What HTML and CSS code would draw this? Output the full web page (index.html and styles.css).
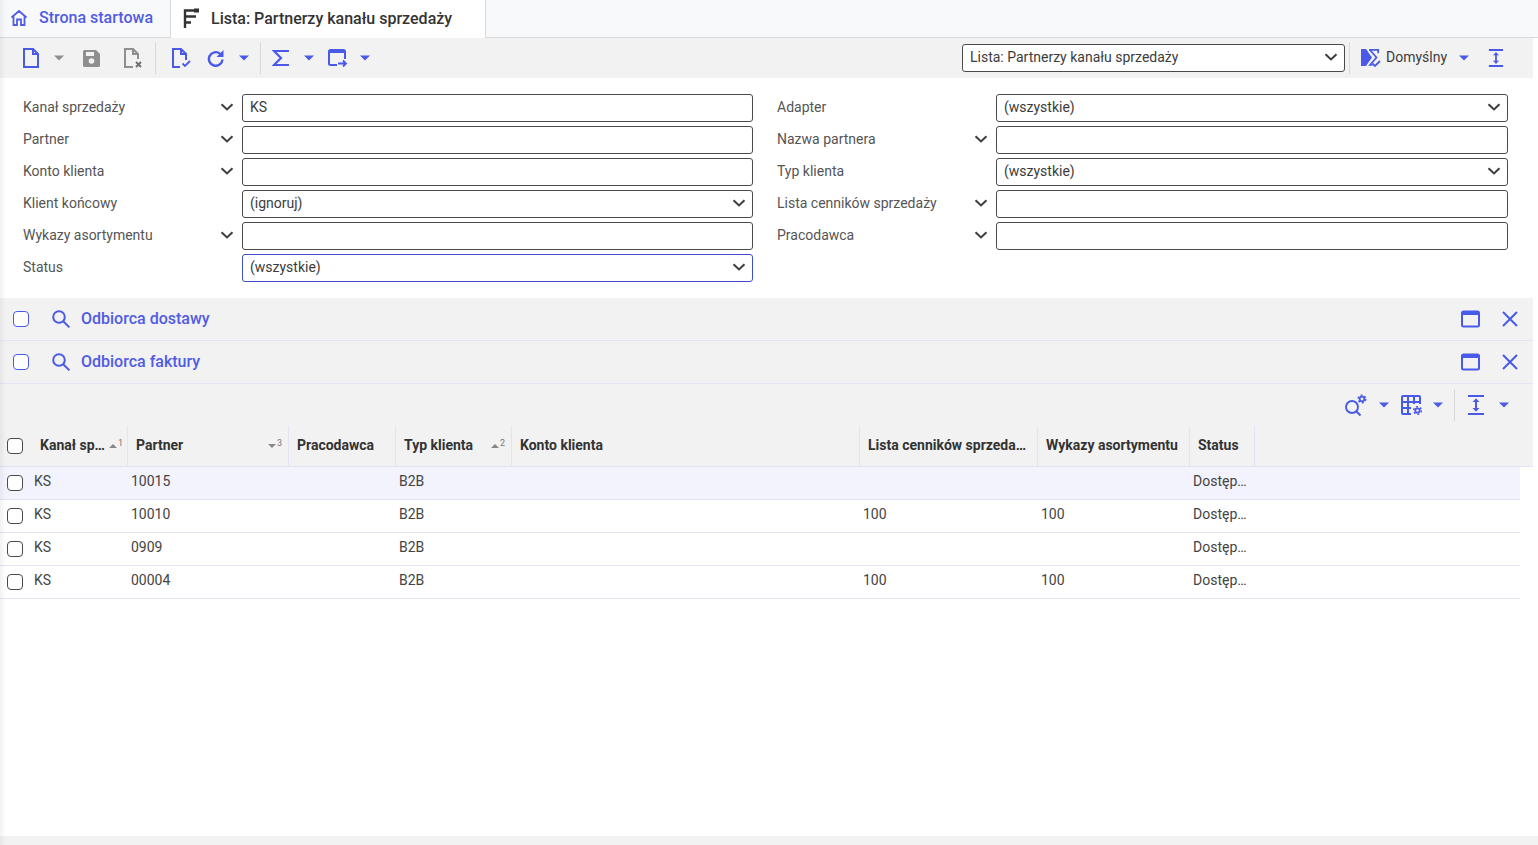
FILE: index.html
```html
<!DOCTYPE html>
<html lang="pl">
<head>
    <meta charset="UTF-8">
    <title>Lista: Partnerzy kanału sprzedaży</title>
    <link rel="stylesheet" href="styles.css">
</head>
<body>
    <svg class="sprites" aria-hidden="true">
        <symbol id="i-caret" viewBox="0 0 10 6"><path d="M0 .5h10L5 5.5z" fill="currentColor"/></symbol>
        <symbol id="i-chevron" viewBox="0 0 14 8"><path d="M1.500 1.200 7 6.400l5.500-5.200" fill="none" stroke="currentColor" stroke-width="2"/></symbol>
        <symbol id="i-search" viewBox="0 0 20 20"><circle cx="8" cy="8" r="5.800" fill="none" stroke="currentColor" stroke-width="2"/><path d="m12.200 12.200 6.200 6.200" stroke="currentColor" stroke-width="2"/></symbol>
        <symbol id="i-window" viewBox="0 0 19 18"><rect x="1" y="1.500" width="17" height="15" rx="1.500" fill="none" stroke="currentColor" stroke-width="2"/><path d="M1 1.500h17V5H1z" fill="currentColor"/></symbol>
        <symbol id="i-close" viewBox="0 0 16 16"><path d="m1 1 14 14M15 1 1 15" stroke="currentColor" stroke-width="2"/></symbol>
        <symbol id="i-expand" viewBox="0 0 18 20"><path d="M1 1h16M1 19h16" stroke="currentColor" stroke-width="2"/><path d="M9 4v12" stroke="currentColor" stroke-width="2"/><path d="M5.500 7 9 3.500 12.500 7zM5.500 13 9 16.500 12.500 13z" fill="currentColor"/></symbol>
    </svg>

    <div class="app">
        <nav class="tabs">
            <a class="tab tab-home">
                <svg class="tab-icon" width="18" height="18" viewBox="0 0 18 18"><path d="M1.500 8.500 9 2l7.500 6.500M3.500 7v9h3.500v-5.500h4V16h3.500V7" fill="none" stroke="currentColor" stroke-width="1.800"/></svg>
                Strona startowa
            </a>
            <a class="tab tab-active">
                <svg class="tab-icon" width="18" height="20" viewBox="0 0 18 20"><path d="M2 20V2.500h10M2 8.500h11M2 14.500h6" fill="none" stroke="currentColor" stroke-width="2.400"/><rect x="11" y="0.500" width="5" height="4" fill="currentColor"/></svg>
                Lista: Partnerzy kanału sprzedaży
            </a>
        </nav>

        <div class="toolbar">
            <div class="tool-group first">
                <span class="tool"><svg width="18" height="20" viewBox="0 0 18 20"><path d="M2 1h9l5 5v13H2z M11 1v5h5" fill="none" stroke="currentColor" stroke-width="2"/></svg></span>
                <span class="caret off"><svg width="10" height="6"><use href="#i-caret"/></svg></span>
                <span class="tool wide off"><svg width="19" height="18" viewBox="0 0 19 18"><path d="M1 2.500A1.500 1.500 0 0 1 2.500 1H14l4 4v11.500a1.500 1.500 0 0 1-1.500 1.500h-14A1.500 1.500 0 0 1 1 16.500z" fill="currentColor"/><path d="M4 3h8v4H4z" fill="#f2f2f2"/><circle cx="9.500" cy="12" r="2.800" fill="#f2f2f2"/></svg></span>
                <span class="tool wide off"><svg width="20" height="20" viewBox="0 0 20 20"><path d="M10 19H2V1h8l5 5v5M10 1v5h5" fill="none" stroke="currentColor" stroke-width="2"/><path d="m13 14 5 5m0-5-5 5" stroke="#6d6d6d" stroke-width="1.800"/></svg></span>
            </div>
            <span class="tool-sep"></span>
            <div class="tool-group second">
                <span class="tool check-doc"><svg width="20" height="20" viewBox="0 0 20 20"><path d="M9 19H2V1h8l5 5v6M10 1v5h5" fill="none" stroke="currentColor" stroke-width="2"/><path d="m11.500 15.500 2.500 2.500 5-5" fill="none" stroke="currentColor" stroke-width="1.800"/></svg></span>
                <span class="tool"><svg width="18" height="18" viewBox="0 0 18 18"><path d="M15.500 10.500a6.800 6.800 0 1 1-2.500-5.800" fill="none" stroke="currentColor" stroke-width="2.400"/><path d="M16.500 1v7h-7z" fill="currentColor"/></svg></span>
                <span class="caret"><svg width="10" height="6"><use href="#i-caret"/></svg></span>
            </div>
            <span class="tool-sep"></span>
            <div class="tool-group third">
                <span class="tool"><svg width="18" height="18" viewBox="0 0 18 18"><path d="M17 2H2l7 7-7 7h15" fill="none" stroke="currentColor" stroke-width="2.200"/></svg></span>
                <span class="caret"><svg width="10" height="6"><use href="#i-caret"/></svg></span>
                <span class="tool window-arrow"><svg width="20" height="20" viewBox="0 0 20 20"><path d="M9 17H2.500A1.500 1.500 0 0 1 1 15.500v-12A1.500 1.500 0 0 1 2.500 2h13A1.500 1.500 0 0 1 17 3.500V11" fill="none" stroke="currentColor" stroke-width="2"/><path d="M1 2h16v3H1z" fill="currentColor"/><path d="M10 15.500h8m-3-3 3 3-3 3" fill="none" stroke="currentColor" stroke-width="1.800"/></svg></span>
                <span class="caret"><svg width="10" height="6"><use href="#i-caret"/></svg></span>
            </div>

            <div class="tool-right">
                <div class="select view-select">Lista: Partnerzy kanału sprzedaży<svg class="chevron" width="14" height="8"><use href="#i-chevron"/></svg></div>
                <span class="tool-sep"></span>
                <svg class="layout-icon" width="21" height="20" viewBox="0 0 21 20"><path d="M1 1h5l6 8.500-6 8.500H1z" fill="currentColor"/><path d="M9 1.800h9.200v3.500M10 2l6.500 7.500L10 17h2.500" fill="none" stroke="currentColor" stroke-width="1.700"/><path d="m12.500 15.500 2.500 2.500 5-5" fill="none" stroke="currentColor" stroke-width="1.800"/></svg>
                <span class="layout-name">Domyślny</span>
                <span class="caret"><svg width="10" height="6"><use href="#i-caret"/></svg></span>
                <span class="tool expand"><svg width="16" height="20"><use href="#i-expand"/></svg></span>
            </div>
        </div>

        <form class="filters">
            <div class="filter-col">
                <label class="field"><span class="field-label">Kanał sprzedaży<svg class="chevron" width="14" height="8"><use href="#i-chevron"/></svg></span><span class="input">KS</span></label>
                <label class="field"><span class="field-label">Partner<svg class="chevron" width="14" height="8"><use href="#i-chevron"/></svg></span><span class="input"></span></label>
                <label class="field"><span class="field-label">Konto klienta<svg class="chevron" width="14" height="8"><use href="#i-chevron"/></svg></span><span class="input"></span></label>
                <label class="field"><span class="field-label">Klient końcowy</span><span class="input select">(ignoruj)<svg class="chevron" width="14" height="8"><use href="#i-chevron"/></svg></span></label>
                <label class="field"><span class="field-label">Wykazy asortymentu<svg class="chevron" width="14" height="8"><use href="#i-chevron"/></svg></span><span class="input"></span></label>
                <label class="field"><span class="field-label">Status</span><span class="input select focused">(wszystkie)<svg class="chevron" width="14" height="8"><use href="#i-chevron"/></svg></span></label>
            </div>
            <div class="filter-col">
                <label class="field"><span class="field-label">Adapter</span><span class="input select">(wszystkie)<svg class="chevron" width="14" height="8"><use href="#i-chevron"/></svg></span></label>
                <label class="field"><span class="field-label">Nazwa partnera<svg class="chevron" width="14" height="8"><use href="#i-chevron"/></svg></span><span class="input"></span></label>
                <label class="field"><span class="field-label">Typ klienta</span><span class="input select">(wszystkie)<svg class="chevron" width="14" height="8"><use href="#i-chevron"/></svg></span></label>
                <label class="field"><span class="field-label">Lista cenników sprzedaży<svg class="chevron" width="14" height="8"><use href="#i-chevron"/></svg></span><span class="input"></span></label>
                <label class="field"><span class="field-label">Pracodawca<svg class="chevron" width="14" height="8"><use href="#i-chevron"/></svg></span><span class="input"></span></label>
            </div>
        </form>

        <div class="section">
            <span class="check check-blue"></span>
            <svg class="section-search" width="20" height="20"><use href="#i-search"/></svg>
            <a class="section-title">Odbiorca dostawy</a>
            <svg class="section-window" width="19" height="18"><use href="#i-window"/></svg>
            <svg class="section-close" width="16" height="16"><use href="#i-close"/></svg>
        </div>
        <div class="section">
            <span class="check check-blue"></span>
            <svg class="section-search" width="20" height="20"><use href="#i-search"/></svg>
            <a class="section-title">Odbiorca faktury</a>
            <svg class="section-window" width="19" height="18"><use href="#i-window"/></svg>
            <svg class="section-close" width="16" height="16"><use href="#i-close"/></svg>
        </div>

        <div class="table-tools">
            <svg class="tt-icon tt-search" width="23" height="22" viewBox="0 0 23 22"><circle cx="8" cy="13" r="6" fill="none" stroke="currentColor" stroke-width="1.900"/><path d="m12.200 17.200 4.300 4.300" stroke="currentColor" stroke-width="2"/><circle cx="18" cy="5" r="2.300" fill="none" stroke="currentColor" stroke-width="1.800"/><circle cx="18" cy="5" r="3.800" fill="none" stroke="currentColor" stroke-width="1.500" stroke-dasharray="2 2"/></svg>
            <span class="caret"><svg width="10" height="6"><use href="#i-caret"/></svg></span>
            <svg class="tt-icon" width="22" height="20" viewBox="0 0 22 20"><path d="M10 19H2a1 1 0 0 1-1-1V2a1 1 0 0 1 1-1h16a1 1 0 0 1 1 1v7M1 7h18M1 13h9M7 1v18M13 1v8" fill="none" stroke="currentColor" stroke-width="2"/><circle cx="16.500" cy="15.500" r="2.200" fill="none" stroke="currentColor" stroke-width="1.800"/><circle cx="16.500" cy="15.500" r="3.800" fill="none" stroke="currentColor" stroke-width="1.500" stroke-dasharray="2 2"/></svg>
            <span class="caret"><svg width="10" height="6"><use href="#i-caret"/></svg></span>
            <span class="tool-sep"></span>
            <svg class="tt-icon tt-expand" width="18" height="20"><use href="#i-expand"/></svg>
            <span class="caret"><svg width="10" height="6"><use href="#i-caret"/></svg></span>
        </div>

        <div class="grid">
            <div class="grid-head">
                <div class="hcell hcell-check"><span class="check"></span></div>
                <div class="hcell hcell-first"><span class="hcell-text">Kanał sp…</span><span class="sort"><i class="sort-up"></i><sup>1</sup></span></div>
                <div class="hcell"><span class="hcell-text">Partner</span><span class="sort"><i class="sort-down"></i><sup>3</sup></span></div>
                <div class="hcell"><span class="hcell-text">Pracodawca</span></div>
                <div class="hcell"><span class="hcell-text">Typ klienta</span><span class="sort"><i class="sort-up"></i><sup>2</sup></span></div>
                <div class="hcell"><span class="hcell-text">Konto klienta</span></div>
                <div class="hcell"><span class="hcell-text">Lista cenników sprzeda…</span></div>
                <div class="hcell"><span class="hcell-text">Wykazy asortymentu</span></div>
                <div class="hcell"><span class="hcell-text">Status</span></div>
            </div>
            <div class="grid-row selected">
                <div class="cell-check"><span class="check"></span></div>
                <div class="cell first">KS</div><div class="cell">10015</div><div class="cell"></div><div class="cell">B2B</div><div class="cell"></div><div class="cell"></div><div class="cell"></div><div class="cell">Dostęp…</div>
            </div>
            <div class="grid-row">
                <div class="cell-check"><span class="check"></span></div>
                <div class="cell first">KS</div><div class="cell">10010</div><div class="cell"></div><div class="cell">B2B</div><div class="cell"></div><div class="cell">100</div><div class="cell">100</div><div class="cell">Dostęp…</div>
            </div>
            <div class="grid-row">
                <div class="cell-check"><span class="check"></span></div>
                <div class="cell first">KS</div><div class="cell">0909</div><div class="cell"></div><div class="cell">B2B</div><div class="cell"></div><div class="cell"></div><div class="cell"></div><div class="cell">Dostęp…</div>
            </div>
            <div class="grid-row">
                <div class="cell-check"><span class="check"></span></div>
                <div class="cell first">KS</div><div class="cell">00004</div><div class="cell"></div><div class="cell">B2B</div><div class="cell"></div><div class="cell">100</div><div class="cell">100</div><div class="cell">Dostęp…</div>
            </div>
        </div>

        <div class="status-bar"></div>
    </div>
</body>
</html>
```

FILE: styles.css
```css
* {
    box-sizing: border-box;
}
html, body {
    height: 100%;
}
body {
    margin: 0;
    overflow: hidden;
    background: #fff;
    color: #3c3c3c;
    font-family: Roboto, "Liberation Sans", sans-serif;
    font-size: 14px;
}
.sprites {
    display: none;
}
svg {
    display: block;
    flex: none;
}
.app {
    position: relative;
    display: flex;
    flex-direction: column;
    height: 845px;
}
.app::before {
    content: "";
    position: absolute;
    top: 0;
    bottom: 0;
    left: 0;
    width: 6px;
    background: linear-gradient(to right, rgba(0,0,0,0.05), rgba(0,0,0,0));
    pointer-events: none;
}

/* tabs */
.tabs {
    display: flex;
    height: 38px;
    background: #f8f9fa;
    border-bottom: 1px solid #d9d9d9;
}
.tab {
    display: flex;
    align-items: center;
    height: 37px;
    padding-bottom: 2px;
    font-size: 16px;
    font-weight: 500;
}
.tab-home {
    width: 171px;
    padding-left: 10px;
    gap: 11px;
    color: #505ce6;
    border-right: 1px solid #d9d9d9;
}
.tab-active {
    width: 315px;
    height: 38px;
    padding-left: 12px;
    gap: 10px;
    color: #333;
    background: #fff;
    border-right: 1px solid #d9d9d9;
}

/* toolbar */
.toolbar {
    display: flex;
    align-items: center;
    width: 1533px;
    height: 40px;
    padding-left: 13px;
    background: #f2f2f2;
    color: #4a5ae8;
}
.tool-group {
    display: flex;
    align-items: center;
}
.tool-group.first {
    margin-right: 2px;
}
.tool-group.second {
    margin: 0 6px;
}
.tool-group.third {
    margin-left: 2px;
}
.tool {
    display: flex;
    align-items: center;
    justify-content: center;
    width: 36px;
    height: 32px;
}
.tool.wide {
    width: 41px;
}
.tool.wide:nth-child(3) {
    margin-left: 2px;
}
.tool.check-doc svg {
    margin-left: 2px;
}
.tool.window-arrow svg {
    margin-left: 1px;
}
.caret {
    display: flex;
    align-items: center;
    justify-content: center;
    width: 20px;
    height: 32px;
    color: #4a5ae8;
}
.off {
    color: #8f8f8f;
}
.tool-sep {
    flex: none;
    width: 1px;
    height: 32px;
    background: #d9d9d9;
}
.tool-right {
    display: flex;
    align-items: center;
    margin-left: auto;
    padding-right: 21px;
}
.view-select {
    width: 383px;
    margin-right: 4px;
    background: #fff;
}
.layout-icon {
    margin: 0 5px 0 10px;
}
.layout-name {
    width: 68px;
    padding-bottom: 2px;
    color: #3c3c3c;
}
.tool.expand {
    width: 32px;
    margin-left: 6px;
}

/* inputs */
.input, .select {
    display: flex;
    align-items: center;
    justify-content: space-between;
    height: 28px;
    padding: 0 6px 2px 7px;
    border: 1px solid #4a4a4a;
    border-radius: 3px;
    background: #fff;
    color: #3c3c3c;
}
.input.focused {
    border-color: #3f4fc4;
}
.chevron {
    color: #3c3c3c;
}

/* filters */
.filters {
    display: grid;
    grid-template-columns: 730px 731px;
    gap: 24px;
    height: 220px;
    padding: 16px 0 0 23px;
}
.filter-col {
    display: flex;
    flex-direction: column;
    gap: 4px;
}
.field {
    display: grid;
    grid-template-columns: 219px 1fr;
    align-items: center;
    height: 28px;
}
.field-label {
    display: flex;
    align-items: center;
    justify-content: space-between;
    padding: 0 8px 2px 0;
    color: #555;
}

/* collapsed sections */
.section {
    display: flex;
    align-items: center;
    width: 1533px;
    height: 43px;
    padding-left: 13px;
    background: #f2f2f2;
    border-bottom: 1px solid #e3e3f7;
    color: #4a5ae8;
}
.section-search {
    margin-left: 22px;
}
.section-title {
    margin-left: 10px;
    padding-bottom: 2px;
    font-size: 16px;
    font-weight: 500;
    color: #505ce6;
}
.section-window {
    margin-left: auto;
}
.section-close {
    margin: 0 15px 0 22px;
}
.check {
    display: block;
    flex: none;
    width: 16px;
    height: 16px;
    border: 1px solid #4a4a4a;
    border-radius: 4px;
    background: #fff;
}
.check-blue {
    border-color: #4a5ae8;
}

/* grid toolbar */
.table-tools {
    display: flex;
    align-items: center;
    justify-content: flex-end;
    width: 1533px;
    height: 42px;
    padding-right: 17px;
    background: #f2f2f2;
    color: #4a5ae8;
}
.table-tools .caret {
    margin: 0 2px 0 5px;
}
.table-tools .tool-sep {
    margin: 0 12px 0 4px;
}
.tt-icon {
    margin-left: 5px;
}
.tt-search {
    margin-right: 2px;
}
.tt-expand {
    margin-left: 0;
    margin-right: 4px;
}

/* grid */
.grid {
    flex: 1;
}
.grid-head, .grid-row {
    display: grid;
    grid-template-columns: 32px 96px 161px 107px 116px 348px 178px 152px 65px;
}
.grid-head {
    width: 1533px;
    height: 41px;
    background: #f2f2f2;
    border-bottom: 1px solid #e3e3f7;
}
.hcell {
    display: flex;
    align-items: center;
    justify-content: space-between;
    padding: 0 6px 0 8px;
    border-right: 1px solid #e3e3f7;
    font-weight: 700;
    color: #333;
    white-space: nowrap;
}
.hcell-text {
    padding-bottom: 2px;
}
.hcell-check {
    padding-left: 7px;
    border-right: 0;
}
.hcell-first {
    padding-right: 4px;
}
.sort {
    display: flex;
    align-items: center;
    gap: 1px;
    color: #777;
}
.sort i {
    display: block;
    width: 0;
    height: 0;
    border-left: 4px solid transparent;
    border-right: 4px solid transparent;
}
.sort-up {
    border-bottom: 4px solid #888;
}
.sort-down {
    border-top: 4px solid #888;
}
.sort sup {
    font-size: 9px;
    font-weight: 400;
    line-height: 8px;
    margin-top: -6px;
}
.grid-row {
    width: 1520px;
    height: 33px;
    border-bottom: 1px solid #e3e3f7;
    align-items: center;
    color: #444;
}
.grid-row.selected {
    background: #f2f3fd;
}
.cell-check {
    padding-left: 7px;
}
.cell {
    padding-left: 3px;
    white-space: nowrap;
    margin-top: -5px;
}
.cell.first {
    padding-left: 2px;
}

.status-bar {
    height: 9px;
    background: #f2f2f2;
}
```
